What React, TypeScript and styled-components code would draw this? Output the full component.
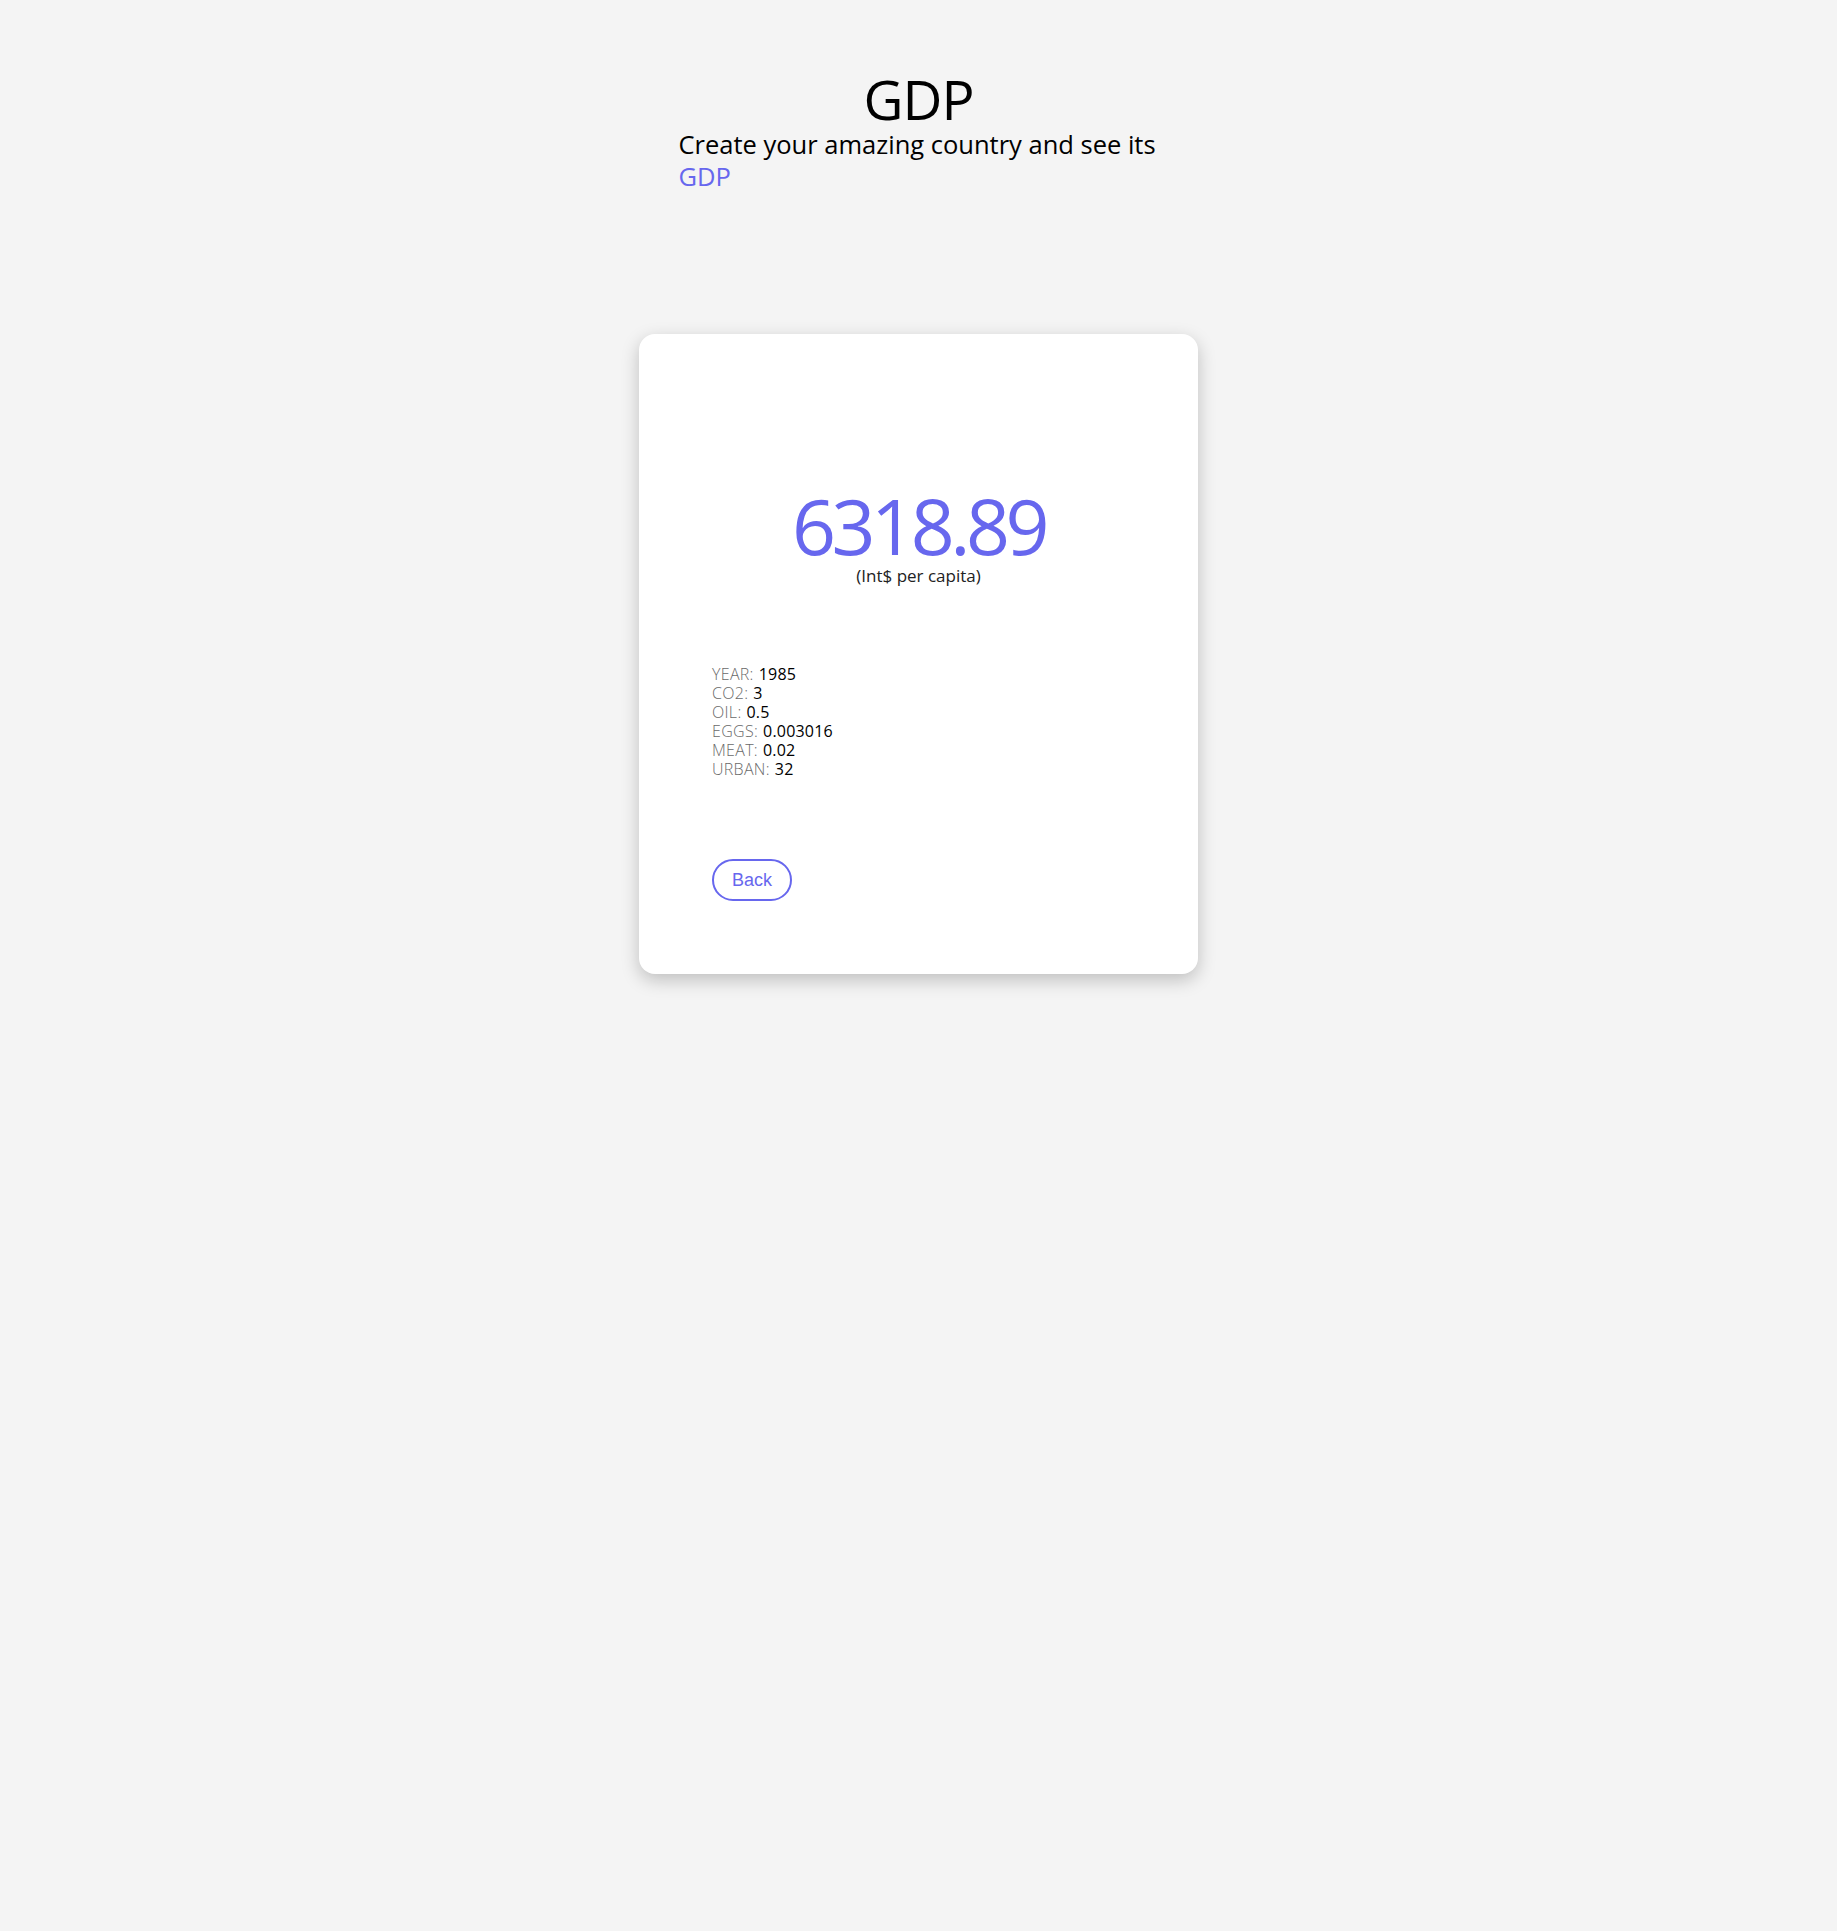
import React from "react";
import styled, { createGlobalStyle } from "styled-components";

const Global = createGlobalStyle`
  html, body { margin: 0; padding: 0; background: #f4f4f4; }
  body { font-family: "Open Sans", "Noto Sans", sans-serif; color: #000; }
`;

const ACCENT = "#6767ee";

const Page = styled.main`
  min-height: 1931px;
  display: flex;
  flex-direction: column;
  align-items: center;
`;

const Header = styled.header`
  width: 480px;
  margin-top: 70px;
  display: flex;
  flex-direction: column;
`;

const Title = styled.h1`
  margin: 0;
  font-size: 55px;
  line-height: 58px;
  font-weight: 400;
  letter-spacing: -1px;
  text-align: center;
`;

const Subtitle = styled.p`
  margin: 0;
  width: 490px;
  font-size: 25.5px;
  line-height: 32px;
  font-weight: 400;
  letter-spacing: 0;
`;

const Accent = styled.span`
  color: ${ACCENT};
`;

const Card = styled.section`
  margin-top: 142px;
  width: 559px;
  box-sizing: border-box;
  padding: 152px 73px 73px;
  background: #fff;
  border-radius: 16px;
  box-shadow: 0 6px 18px rgba(0, 0, 0, 0.22);
  display: flex;
  flex-direction: column;
`;

const Result = styled.div`
  display: flex;
  flex-direction: column;
  align-items: center;
`;

const Amount = styled.div`
  font-size: 77px;
  line-height: 79px;
  letter-spacing: -4.5px;
  color: ${ACCENT};
`;

const Unit = styled.div`
  font-size: 17px;
  line-height: 22px;
  color: #222;
`;

const Stats = styled.dl`
  margin: 78px 0 0;
  display: flex;
  flex-direction: column;
  font-size: 16px;
  line-height: 19px;
`;

const StatRow = styled.div`
  display: flex;
  gap: 5px;
`;

const StatLabel = styled.dt`
  font-weight: 300;
  letter-spacing: 0.3px;
  color: #6a6a6a;
`;

const StatValue = styled.dd`
  margin: 0;
  font-weight: 500;
  letter-spacing: 0.2px;
  color: #000;
`;

const BackButton = styled.button`
  margin-top: 80px;
  align-self: flex-start;
  height: 42px;
  padding: 0 18px;
  border: 2px solid ${ACCENT};
  border-radius: 21px;
  background: #fff;
  color: ${ACCENT};
  font-family: "Liberation Sans", Arial, sans-serif;
  font-size: 18px;
  cursor: pointer;
`;

const stats: [string, string][] = [
  ["YEAR", "1985"],
  ["CO2", "3"],
  ["OIL", "0.5"],
  ["EGGS", "0.003016"],
  ["MEAT", "0.02"],
  ["URBAN", "32"],
];

export default function App() {
  return (
    <>
      <Global />
      <Page>
        <Header>
          <Title>GDP</Title>
          <Subtitle>
            Create your amazing country and see its <Accent>GDP</Accent>
          </Subtitle>
        </Header>
        <Card>
          <Result>
            <Amount>6318.89</Amount>
            <Unit>(Int$ per capita)</Unit>
          </Result>
          <Stats>
            {stats.map(([k, v]) => (
              <StatRow key={k}>
                <StatLabel>{k}:</StatLabel>
                <StatValue>{v}</StatValue>
              </StatRow>
            ))}
          </Stats>
          <BackButton>Back</BackButton>
        </Card>
      </Page>
    </>
  );
}
